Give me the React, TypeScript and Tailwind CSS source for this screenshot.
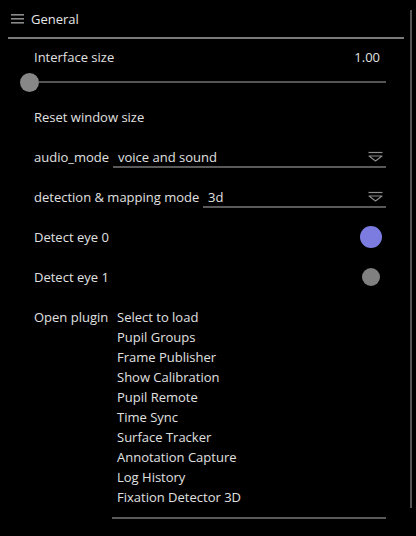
import React from 'react';

// Pupil Capture style "General" settings menu

const plugins = [
  'Select to load',
  'Pupil Groups',
  'Frame Publisher',
  'Show Calibration',
  'Pupil Remote',
  'Time Sync',
  'Surface Tracker',
  'Annotation Capture',
  'Log History',
  'Fixation Detector 3D',
];

const DropIcon = () => (
  <svg width="15" height="12" viewBox="0 0 15 12" className="shrink-0">
    <line x1="0.5" y1="1.5" x2="14.5" y2="1.5" stroke="#8c8c8c" strokeWidth="1.2" />
    <polygon points="1,5 14,5 7.5,10" fill="none" stroke="#8c8c8c" strokeWidth="1.1" strokeLinejoin="round" />
  </svg>
);

const Select = ({ value, width }: { value: string; width: string }) => (
  <div className={`${width} h-[21px] border-b-2 border-[#5a5a5a] flex items-center justify-between pl-[5px] pr-[3px]`}>
    <span>{value}</span>
    <DropIcon />
  </div>
);

export default function App() {
  return (
    <div
      className="w-[416px] h-[536px] bg-black text-[#e0e0e0] text-[13px] leading-[20px] overflow-hidden"
      style={{ fontFamily: '"Open Sans", "Noto Sans", sans-serif' }}
    >
      <div className="mt-[10px] w-[412px] h-[498px] border-r-2 border-[#555]">
        {/* Header */}
        <div className="h-[18px] mb-[9px] flex items-center pl-[11px] gap-[7px]">
          <svg width="13" height="10" viewBox="0 0 13 10">
            <rect x="0" y="0" width="13" height="1.6" fill="#8a8a8a" />
            <rect x="0" y="4" width="13" height="1.6" fill="#8a8a8a" />
            <rect x="0" y="8" width="13" height="1.6" fill="#8a8a8a" />
          </svg>
          <span className="text-[#e6e6e6]">General</span>
        </div>
        <div className="ml-[8px] w-[396px] h-[2px] bg-[#7a7a7a]" />

        <div className="pl-[34px] w-[386px]">
          {/* Interface size */}
          <div className="mt-[8px] h-[20px] flex items-center justify-between pr-[6px]">
            <span>Interface size</span>
            <span>1.00</span>
          </div>
          <div className="h-[30px] -ml-[14px] flex items-center">
            <div className="w-[19px] h-[19px] rounded-full bg-[#878787] shrink-0" />
            <div className="flex-1 h-[2px] bg-[#555]" />
          </div>

          <div className="mt-[10px] flex flex-col">
            <div className="h-[40px]">
              <div className="h-[20px] flex items-center">Reset window size</div>
            </div>
            <div className="h-[40px]">
              <div className="flex items-start justify-between">
                <span>audio_mode</span>
                <Select value="voice and sound" width="w-[273px]" />
              </div>
            </div>
            <div className="h-[40px]">
              <div className="flex items-start justify-between">
                <span>detection &amp; mapping mode</span>
                <Select value="3d" width="w-[183px]" />
              </div>
            </div>
            <div className="h-[40px]">
              <div className="h-[20px] flex items-center justify-between pr-[4px]">
                <span>Detect eye 0</span>
                <div className="w-[22px] h-[22px] rounded-full bg-[#7b7be0]" />
              </div>
            </div>
            <div className="h-[40px]">
              <div className="h-[20px] flex items-center justify-between pr-[6px]">
                <span>Detect eye 1</span>
                <div className="w-[18px] h-[18px] rounded-full bg-[#808080]" />
              </div>
            </div>
            <div className="flex items-start justify-between">
              <span>Open plugin</span>
              <div className="w-[274px] pl-[5px] pb-[10px] border-b-2 border-[#5a5a5a] flex flex-col">
                {plugins.map(p => (
                  <div key={p} className="h-[20px] flex items-center">{p}</div>
                ))}
              </div>
            </div>
          </div>
        </div>
      </div>
    </div>
  );
}
